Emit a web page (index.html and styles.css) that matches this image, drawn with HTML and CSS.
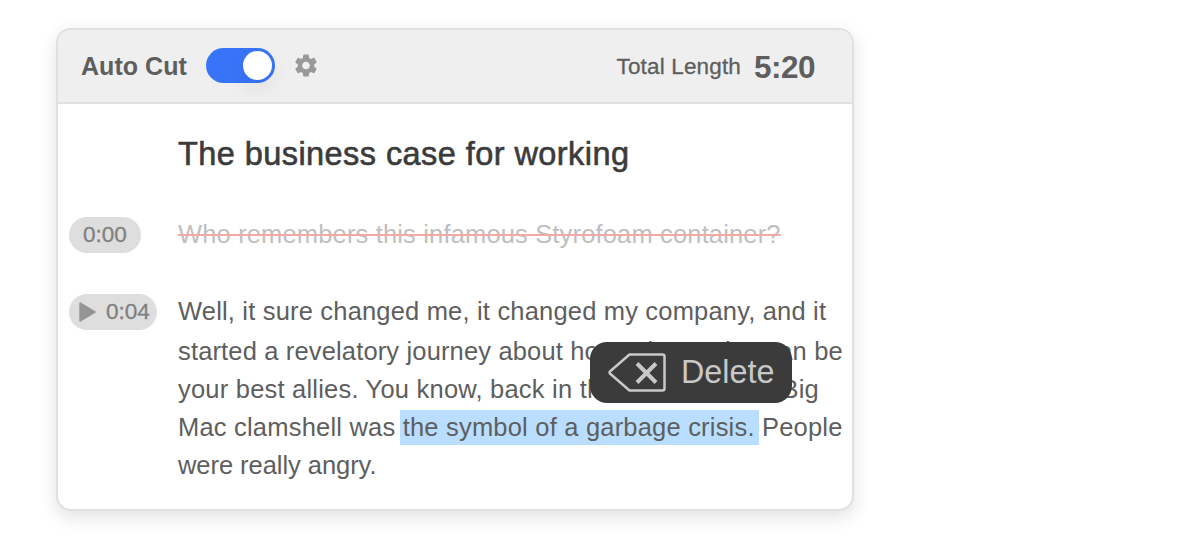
FILE: index.html
```html
<!DOCTYPE html>
<html lang="en">
<head>
<meta charset="utf-8">
<title>Transcript editor</title>
<link rel="stylesheet" href="styles.css">
</head>
<body>
<main class="card">
  <header class="toolbar">
    <span class="auto-label">Auto Cut</span>
    <span class="toggle"><span class="knob"></span></span>
    <svg class="gear" viewBox="2 2 20 20"><path d="M19.43 12.98c.04-.32.07-.64.07-.98s-.03-.66-.07-.98l2.11-1.65c.19-.15.24-.42.12-.64l-2-3.46c-.12-.22-.39-.3-.61-.22l-2.49 1c-.52-.4-1.08-.73-1.69-.98l-.38-2.65C14.46 2.18 14.25 2 14 2h-4c-.25 0-.46.18-.49.42l-.38 2.65c-.61.25-1.17.59-1.69.98l-2.49-1c-.23-.09-.49 0-.61.22l-2 3.46c-.13.22-.07.49.12.64l2.11 1.65c-.04.32-.07.65-.07.98s.03.66.07.98l-2.11 1.65c-.19.15-.24.42-.12.64l2 3.46c.12.22.39.3.61.22l2.49-1c.52.4 1.08.73 1.69.98l.38 2.65c.03.24.24.42.49.42h4c.25 0 .46-.18.49-.42l.38-2.65c.61-.25 1.17-.59 1.69-.98l2.49 1c.23.09.49 0 .61-.22l2-3.46c.12-.22.07-.49-.12-.64l-2.11-1.65zM12 15.5c-1.93 0-3.5-1.57-3.5-3.5s1.57-3.5 3.5-3.5 3.5 1.57 3.5 3.5-1.57 3.5-3.5 3.5z"/></svg>
    <span class="total-label">Total Length</span>
    <span class="total-value">5:20</span>
  </header>
  <h1 class="title">The business case for working</h1>
  <section class="row row-cut">
    <div class="stamp-cell"><span class="stamp">0:00</span></div>
    <p class="line line-cut"><span class="cut">Who remembers this infamous Styrofoam container?</span></p>
  </section>
  <section class="row">
    <div class="stamp-cell"><span class="stamp stamp-play"><svg class="play" viewBox="0 0 17 20"><path d="M1.3 1.3 L15.7 10 L1.3 18.7 Z"/></svg>0:04</span></div>
    <div class="text">
      <p class="line line-first">Well, it sure changed me, it changed my company, and it</p>
      <p class="line line-second">started a revelatory journey about how adversaries can be</p>
      <p class="line line-third">your best allies. You know, back in the late '80s, this Big</p>
      <p class="line line-fourth">Mac clamshell was <mark class="selected">the symbol of a garbage crisis.</mark> People</p>
      <p class="line line-last">were really angry.</p>
      <button class="delete" type="button">
        <svg class="delete-icon" viewBox="0 0 58 39"><path class="outline" d="M21.5 1.5 H54.5 Q56.5 1.5 56.5 3.5 V35.5 Q56.5 37.5 54.5 37.5 H21.5 L2.2 20.8 Q.8 19.5 2.2 18.2 Z"/><path class="cross" d="M29 10.5 L48 29.5 M48 10.5 L29 29.5"/></svg>
        <span class="delete-label">Delete</span>
      </button>
    </div>
  </section>
</main>
</body>
</html>
```
FILE: styles.css
```css
* { box-sizing: border-box; }
body {
  margin: 0;
  padding: 28px 0 0 56px;
  height: 540px;
  overflow: hidden;
  background: #fff;
  color: #5e5e5e;
  font-family: "Liberation Sans", Arial, sans-serif;
}
.card {
  width: 798px;
  height: 483px;
  border: 2px solid #e0e0e0;
  border-radius: 15px;
  background: #fff;
  box-shadow: 0 6px 18px rgba(0, 0, 0, .12);
}
.toolbar {
  display: flex;
  align-items: center;
  height: 74px;
  padding: 0 37px 0 23px;
  background: #efefef;
  border-bottom: 2px solid #e0e0e0;
  border-radius: 13px 13px 0 0;
}
.auto-label { width: 125px; font-size: 25px; font-weight: 700; letter-spacing: .05px; white-space: nowrap; }
.toggle {
  display: flex;
  justify-content: flex-end;
  align-items: center;
  width: 69px;
  height: 35px;
  margin-top: -1px;
  padding-right: 3px;
  border-radius: 18px;
  background: #3774f7;
}
.knob { width: 29px; height: 29px; border-radius: 50%; background: #fff; box-shadow: 0 9px 22px rgba(0, 0, 0, .07); }
.gear { width: 22px; height: 23px; margin: -1px 0 0 20px; fill: #999; }
.total-label { margin-left: auto; margin-right: 13px; padding-top: 1px; font-size: 22.5px; letter-spacing: .15px; -webkit-text-stroke: .3px #5e5e5e; }
.total-value { padding-top: 2px; font-size: 31.5px; font-weight: 700; letter-spacing: -.5px; }
.title {
  margin: 30px 0 0 120px;
  color: #3b3b3b;
  font-size: 32.5px;
  line-height: 40px;
  font-weight: 400;
  letter-spacing: .43px;
  -webkit-text-stroke: .6px #3b3b3b;
}
.row { display: flex; margin-top: 39px; }
.row-cut { margin-top: 43px; }
.stamp-cell { flex: 0 0 120px; padding-left: 11px; }
.stamp {
  display: flex;
  width: 72px;
  height: 36px;
  align-items: center;
  justify-content: center;
  border-radius: 18px;
  background: #dedede;
  color: #808080;
  font-size: 22.5px;
  -webkit-text-stroke: .3px #808080;
}
.stamp-play { width: 88px; padding-left: 3px; gap: 10px; }
.play { width: 17px; height: 20px; fill: #959595; stroke: #959595; stroke-width: 2; stroke-linejoin: round; }
.line { margin: 0; height: 38px; font-size: 25.5px; line-height: 36px; letter-spacing: .155px; white-space: nowrap; }
.line-cut { height: 38px; line-height: 34px; color: #bfbfbf; }
.cut { text-decoration: line-through 2px #f3a8a3; }
.text { position: relative; }
.line-first { height: 39px; line-height: 35px; letter-spacing: .18px; }
.line-second { letter-spacing: .15px; }
.line-third { letter-spacing: .21px; }
.line-fourth { letter-spacing: .2px; }
.line-last { letter-spacing: -.05px; }
.selected { background: #badeff; color: inherit; padding: 3px 4px 4px 3px; margin: 0 -4px 0 -3px; }
.delete {
  position: absolute;
  left: 412px;
  top: 48px;
  display: flex;
  align-items: center;
  width: 202px;
  height: 61px;
  padding: 0 0 0 18px;
  gap: 15px;
  border: 0;
  border-radius: 17px;
  background: #3b3b3b;
  color: #c8c8c8;
  font: 32.3px "Liberation Sans", Arial, sans-serif;
}
.delete-icon { width: 58px; height: 39px; fill: none; stroke: #c8c8c8; }
.outline { stroke-width: 2.5; stroke-linejoin: round; }
.cross { stroke-width: 4; }
```
